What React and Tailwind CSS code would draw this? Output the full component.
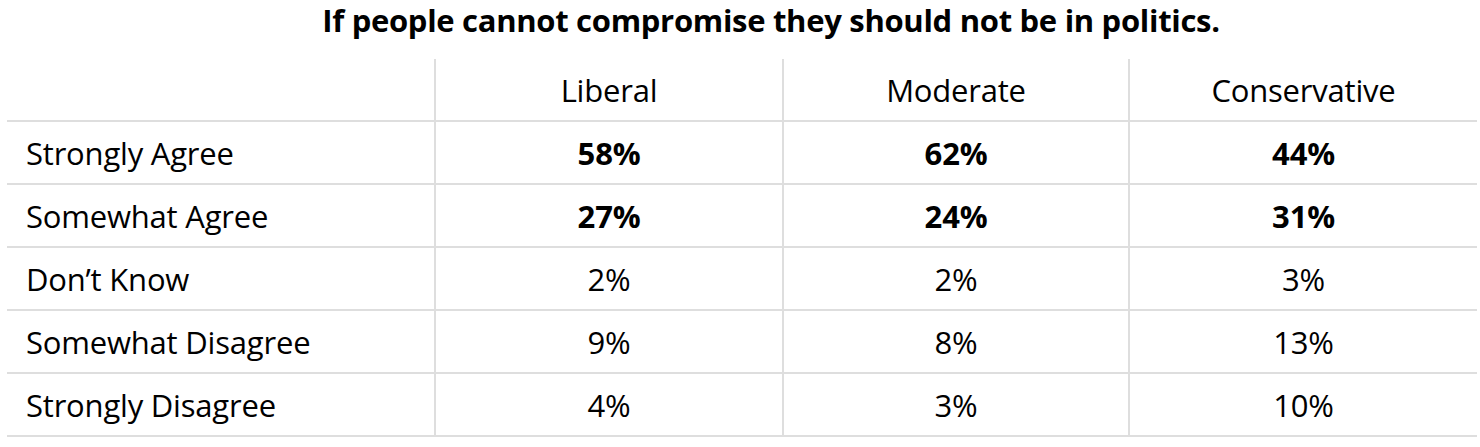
import React from "react";

const rows = [
  { label: "Strongly Agree", vals: ["58%", "62%", "44%"], bold: true },
  { label: "Somewhat Agree", vals: ["27%", "24%", "31%"], bold: true },
  { label: "Don\u2019t Know", vals: ["2%", "2%", "3%"], bold: false },
  { label: "Somewhat Disagree", vals: ["9%", "8%", "13%"], bold: false },
  { label: "Strongly Disagree", vals: ["4%", "3%", "10%"], bold: false },
];

const font = { fontFamily: '"Open Sans", "Noto Sans", sans-serif' };

export default function App() {
  return (
    <div className="w-[1480px] h-[447px] bg-white text-black" style={font}>
      <div className="flex justify-center pl-[62px] h-[59px]">
        <h1 className="text-[31px] font-bold leading-[40px] tracking-[-0.3px]">
          If people cannot compromise they should not be in politics.
        </h1>
      </div>
      <div className="ml-[7px] grid grid-cols-[427px_348px_346px_349px] text-[31px] tracking-[-0.2px]">
        <div className="h-[63px] border-b-2 border-[#dedede]" />
        {["Liberal", "Moderate", "Conservative"].map((h) => (
          <div
            key={h}
            className="h-[63px] border-b-2 border-l-2 border-[#dedede] flex items-center justify-center pt-[2px]"
          >
            {h}
          </div>
        ))}
        {rows.map((r) => (
          <React.Fragment key={r.label}>
            <div className="h-[63px] border-b-2 border-[#dedede] flex items-center pl-[19px] pt-[2px]">
              {r.label}
            </div>
            {r.vals.map((v, i) => (
              <div
                key={i}
                className={`h-[63px] border-b-2 border-l-2 border-[#dedede] flex items-center justify-center pt-[2px] ${r.bold ? "font-bold" : ""}`}
              >
                {v}
              </div>
            ))}
          </React.Fragment>
        ))}
      </div>
    </div>
  );
}
